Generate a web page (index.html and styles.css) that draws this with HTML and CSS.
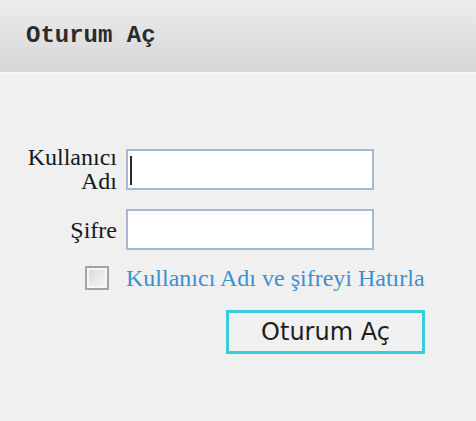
FILE: index.html
```html
<!DOCTYPE html>
<html lang="tr">
<head>
<meta charset="utf-8">
<title>Oturum Aç</title>
<link rel="stylesheet" href="styles.css">
</head>
<body>
<div class="header"><h1 class="title">Oturum Aç</h1></div>
<form class="login">
  <label class="lbl" for="user">Kullanıcı Adı</label>
  <div class="field"><input id="user" class="txt" type="text"><span class="caret"></span></div>
  <label class="lbl" for="pass">Şifre</label>
  <div class="field"><input id="pass" class="txt" type="password"></div>
  <input id="remember" class="chk" type="checkbox">
  <label class="remember" for="remember">Kullanıcı Adı ve şifreyi Hatırla</label>
  <button class="btn" type="button">Oturum Aç</button>
</form>
</body>
</html>
```

FILE: styles.css
```css
html, body {
  margin: 0;
  padding: 0;
  background: #f0f0f0;
}
.header {
  height: 72px;
  background: linear-gradient(#ececec, #d7d7d7);
  border-bottom: 2px solid #f8f8f8;
  padding: 0 0 0 26px;
  box-sizing: content-box;
}
.title {
  margin: 0;
  padding-top: 24px;
  font-family: "Liberation Mono", "Courier New", monospace;
  font-weight: bold;
  font-size: 24px;
  line-height: 24px;
  color: #2b2b2b;
}
.login {
  display: grid;
  grid-template-columns: 91px 301px;
  column-gap: 9px;
  row-gap: 16px;
  align-items: center;
  padding: 71px 0 0 26px;
  font-family: "Liberation Serif", "Times New Roman", Times, serif;
  font-size: 24px;
  line-height: 24px;
  color: #141a22;
}
.lbl {
  text-align: right;
}
.field {
  position: relative;
  width: 248px;
  height: 41px;
}
.txt {
  box-sizing: border-box;
  width: 248px;
  height: 41px;
  margin: 0;
  border: 2px solid #a6b9cd;
  background: #ffffff;
  outline: none;
  padding: 0 6px;
  font-size: 20px;
}
.caret {
  position: absolute;
  left: 4px;
  top: 7px;
  width: 2px;
  height: 29px;
  background: #2a2a2a;
}
.chk {
  appearance: none;
  -webkit-appearance: none;
  justify-self: end;
  margin: 0 8px 0 0;
  width: 24px;
  height: 24px;
  box-sizing: border-box;
  border: 2px solid #a3a3a3;
  box-shadow: inset 0 0 0 2px #f6f6f6;
  background: linear-gradient(135deg, #d8d8d8, #f8f8f8);
}
.remember {
  color: #3d8fd2;
  white-space: nowrap;
}
.btn {
  grid-column: 2;
  justify-self: end;
  margin: 4px 2px 0 0;
  width: 199px;
  height: 44px;
  box-sizing: border-box;
  border: 3px solid #3ccbdd;
  background: #f0f0f0;
  font-family: "DejaVu Sans", Verdana, sans-serif;
  font-size: 24px;
  color: #1e1e1e;
  padding: 0;
}
```
